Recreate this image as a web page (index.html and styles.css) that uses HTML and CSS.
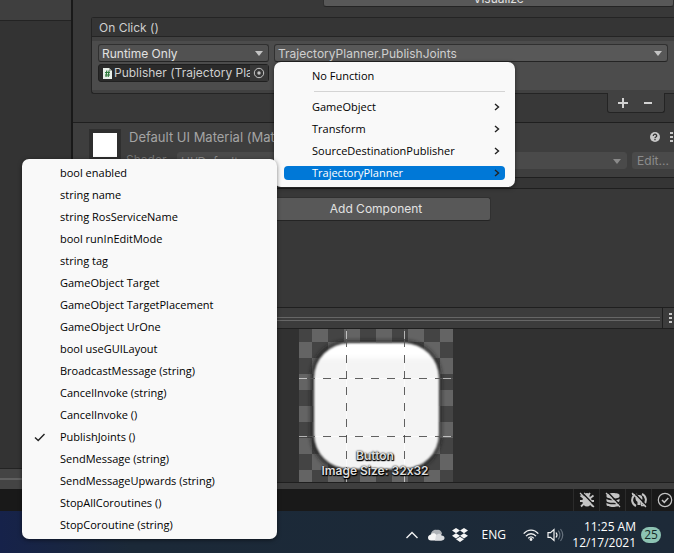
FILE: index.html
```html
<!DOCTYPE html>
<html lang="en">
<head>
<meta charset="utf-8">
<title>Inspector</title>
<link rel="stylesheet" href="styles.css">
</head>
<body>
<main class="editor">
  <aside class="side">
    <div class="side-head"></div>
    <div class="side-body"></div>
    <div class="side-foot"></div>
  </aside>

  <section class="inspector">
    <div class="script-row"><button class="btn visualize">Visualize</button></div>

    <div class="event">
      <div class="event-head">On Click ()</div>
      <div class="event-body">
        <div class="event-target">
          <div class="drop"><select aria-label="Call state"><option>Runtime Only</option></select></div>
          <div class="object">
            <svg class="script-icon" width="9" height="11" viewBox="0 0 9 11"><path d="M0 0h6l3 3v8H0z" fill="#e8efe9"/><path d="M6 0l3 3H6z" fill="#a9b5aa"/><path d="M3.800 2.500L3 9M6 2.500L5.200 9M2 4.500h5M2 7h5" stroke="#2f7a3d" stroke-width="1.200"/></svg>
            <input type="text" aria-label="Target object" value="Publisher (Trajectory Planner)" readonly>
            <button class="pick" aria-label="Pick object"><svg width="12" height="12" viewBox="0 0 12 12"><circle cx="6" cy="6" r="4.700" fill="none" stroke="#c4c4c4"/><circle cx="6" cy="6" r="1.700" fill="#c4c4c4"/></svg></button>
          </div>
        </div>
        <div class="drop drop-wide"><select aria-label="Function"><option>TrajectoryPlanner.PublishJoints</option></select></div>
      </div>
    </div>
    <div class="event-tools">
      <button aria-label="Add"><svg width="10" height="10" viewBox="0 0 10 10"><path d="M5 0v10M0 5h10" stroke="#d2d2d2" stroke-width="2"/></svg></button>
      <button aria-label="Remove"><svg width="10" height="10" viewBox="0 0 10 10"><path d="M1 5h8" stroke="#d2d2d2" stroke-width="2"/></svg></button>
    </div>

    <div class="material">
      <div class="thumb"></div>
      <div class="material-main">
        <div class="material-title">
          <span>Default UI Material (Material)</span>
          <svg class="help" width="10" height="10" viewBox="0 0 10 10"><circle cx="5" cy="5" r="5" fill="#c8c8c8"/><path d="M3.300 3.900c0-2.300 3.500-2.200 3.400 0C6.700 5 5 5 5 6.200M5 7v1.300" fill="none" stroke="#333" stroke-width="1.300"/></svg>
          <svg width="3" height="12" viewBox="0 0 3 12"><path d="M0 1h3v2H0zM0 5h3v2H0zM0 9h3v2H0z" fill="#c8c8c8"/></svg>
        </div>
        <div class="shader">
          <label for="shader">Shader</label>
          <div class="drop drop-off"><select id="shader" disabled><option>UI/Default</option></select></div>
          <button class="edit" disabled>Edit...</button>
        </div>
      </div>
    </div>
    <div class="strip"></div>

    <div class="add"><button class="btn add-btn">Add Component</button></div>

    <div class="preview-head">
      <div class="grip"></div>
      <button class="kebab" aria-label="Preview menu"><svg width="3" height="12" viewBox="0 0 3 12"><path d="M0 1h3v2H0zM0 5h3v2H0zM0 9h3v2H0z" fill="#c8c8c8"/></svg></button>
    </div>
    <div class="preview">
      <figure>
        <svg width="154" height="153" viewBox="0 0 154 153">
          <defs>
            <pattern id="check" x="13" y="13" width="32" height="32" patternUnits="userSpaceOnUse">
              <path d="M0 0h32v32H0z" fill="#444"/><path d="M16 0h16v16H16zM0 16h16v16H0z" fill="#646464"/>
            </pattern>
            <filter id="dark" x="-20%" y="-20%" width="140%" height="140%"><feGaussianBlur stdDeviation="2"/></filter>
            <filter id="soft"><feGaussianBlur stdDeviation="1"/></filter>
            <linearGradient id="fill" x1="0" y1="0" x2="0" y2="1">
              <stop offset="0" stop-color="#fff"/><stop offset=".09" stop-color="#fff"/><stop offset=".15" stop-color="#f4f4f4"/><stop offset="1" stop-color="#f4f4f4"/>
            </linearGradient>
          </defs>
          <rect width="154" height="153" fill="url(#check)"/>
          <rect x="12" y="12" width="130" height="130" rx="36" fill="#1c1c1c" opacity=".85" filter="url(#dark)"/>
          <rect x="15" y="14" width="125" height="126" rx="35" fill="url(#fill)" filter="url(#soft)"/>
          <g fill="none">
            <path d="M47.500 0v153M105.500 0v153M0 49.500h154M0 107.500h154" stroke="#fff" stroke-opacity=".6"/>
            <path d="M47.500-6v159M105.500-6v159M-8 49.500h162M-8 107.500h162" stroke="#444" stroke-opacity=".85" stroke-dasharray="8 8"/>
          </g>
        </svg>
        <figcaption>Button<br>Image Size: 32x32</figcaption>
      </figure>
    </div>
    <div class="preview-foot"></div>
  </section>
</main>

<footer class="status">
  <button aria-label="Debugger"><svg width="16" height="16" viewBox="0 0 16 16"><ellipse cx="8" cy="9" rx="4.600" ry="5.500" fill="#c4c4c4"/><circle cx="8" cy="3.500" r="2.500" fill="#c4c4c4"/><path d="M1.500 3.500l4 3M14.500 3.500l-4 3M1 9h14M2 14.500l3-3M14 14.500l-3-3M5 1l1.500 2M11 1L9.500 3" stroke="#c4c4c4" stroke-width="1.800"/><path d="M2.500 0l13.500 14" stroke="#191919" stroke-width="1.500"/><path d="M1 1l14 14" stroke="#c4c4c4" stroke-width="1.300"/></svg></button>
  <button aria-label="Cache server"><svg width="16" height="16" viewBox="0 0 16 16"><path d="M1.500 3c0-2.700 13-2.700 13 0v1.500c0 2.700-13 2.700-13 0zM1.500 6.800c2 2 11 2 13 0v2c0 2.700-13 2.700-13 0zM1.500 10.800c2 2 11 2 13 0v2c0 2.900-13 2.900-13 0z" fill="#c4c4c4"/><path d="M2.500 0l13.500 14" stroke="#191919" stroke-width="1.500"/><path d="M1 1l14 14" stroke="#c4c4c4" stroke-width="1.300"/></svg></button>
  <button aria-label="Auto lighting"><svg width="16" height="16" viewBox="0 0 16 16"><path d="M5 14A6.500 6.500 0 0 1 3 3.500M11 2A6.500 6.500 0 0 1 13 12.500" fill="none" stroke="#c4c4c4" stroke-width="2"/><path d="M1 2.500h4.500V7M15 13.500h-4.500V9" fill="none" stroke="#c4c4c4" stroke-width="1.300"/><circle cx="8" cy="6.500" r="3.400" fill="#c4c4c4"/><path d="M6.500 9h3v4h-3z" fill="#c4c4c4"/><path d="M2.500 0l13.500 14" stroke="#191919" stroke-width="1.500"/><path d="M1 1l14 14" stroke="#c4c4c4" stroke-width="1.300"/></svg></button>
  <button class="last" aria-label="Progress"><svg width="16" height="16" viewBox="0 0 16 16"><circle cx="8" cy="8" r="6.700" fill="none" stroke="#c4c4c4" stroke-width="1.200"/><path d="M5 8l2.300 2.300L11.300 6" fill="none" stroke="#c4c4c4" stroke-width="1.500"/></svg></button>
</footer>

<footer class="taskbar">
  <svg class="chev" width="14" height="10" viewBox="0 0 14 10"><path d="M1.500 8L7 2.500 12.500 8" fill="none" stroke="#f2f2f2" stroke-width="1.400"/></svg>
  <svg class="cloud" width="18" height="12" viewBox="0 0 18 12"><path d="M4 7C3 3 7 0 10 1c2-.8 5 1 5 4l-6 5z" fill="#aeb2b7"/><path d="M4 11.500C0 11.500 0 6 4 5.500c1.500-2 4-1.500 5 0l7 4c0 1-1 2-2 2z" fill="#f6f6f6"/><path d="M9 6.500c2-2.500 5-2 5.500 0 4 0 4 5 0 5H8z" fill="#dadcdf"/></svg>
  <svg class="box" width="16" height="14" viewBox="0 0 16 14"><path d="M4 0l4 2.600-4 2.600L0 2.600zM12 0l4 2.600-4 2.600-4-2.600zM4 5.200l4 2.600-4 2.600-4-2.600zM12 5.200l4 2.600-4 2.600-4-2.600zM8 8.700l4 2.600L8 14l-4-2.700z" fill="#f6f6f6"/></svg>
  <span class="lang">ENG</span>
  <svg class="wifi" width="16" height="12" viewBox="0 0 16 12"><g fill="none" stroke="#f2f2f2" stroke-width="1.300"><path d="M.7 4.700c4-4.800 10.600-4.800 14.600 0M3 7.200c2.800-3.300 7.200-3.300 10 0M5.200 9.300c1.600-1.900 4-1.900 5.600 0"/></g><circle cx="8" cy="10.500" r="1.400" fill="#f2f2f2"/></svg>
  <svg class="sound" width="17" height="14" viewBox="0 0 17 14"><path d="M1 4.700h2.500L7 1.500v11L3.500 9.300H1z" fill="none" stroke="#f2f2f2" stroke-width="1.200"/><path d="M9 4.500q2 2.500 0 5" fill="none" stroke="#f2f2f2" stroke-width="1.200"/><path d="M11.300 2.700q3.200 4.300 0 8.600M13.500 1q4.500 6 0 12" fill="none" stroke="#66717d" stroke-width="1.200"/></svg>
  <div class="clock"><time>11:25 AM</time><time>12/17/2021</time></div>
  <span class="badge">25</span>
</footer>

<ul class="menu menu-components">
  <li><button>No Function</button></li>
  <li class="rule"></li>
  <li><button>GameObject<svg width="6" height="8" viewBox="0 0 6 8"><path d="M1 1l3.500 3L1 7"/></svg></button></li>
  <li><button>Transform<svg width="6" height="8" viewBox="0 0 6 8"><path d="M1 1l3.500 3L1 7"/></svg></button></li>
  <li><button>SourceDestinationPublisher<svg width="6" height="8" viewBox="0 0 6 8"><path d="M1 1l3.500 3L1 7"/></svg></button></li>
  <li><button class="active">TrajectoryPlanner<svg width="6" height="8" viewBox="0 0 6 8"><path d="M1 1l3.500 3L1 7"/></svg></button></li>
</ul>

<ul class="menu menu-members">
  <li><button>bool enabled</button></li>
  <li><button>string name</button></li>
  <li><button>string RosServiceName</button></li>
  <li><button>bool runInEditMode</button></li>
  <li><button>string tag</button></li>
  <li><button>GameObject Target</button></li>
  <li><button>GameObject TargetPlacement</button></li>
  <li><button>GameObject UrOne</button></li>
  <li><button>bool useGUILayout</button></li>
  <li><button>BroadcastMessage (string)</button></li>
  <li><button>CancelInvoke (string)</button></li>
  <li><button>CancelInvoke ()</button></li>
  <li><button class="checked"><svg width="12" height="9" viewBox="0 0 12 9"><path d="M1 4.500L4.200 7.500 10.500 1"/></svg>PublishJoints ()</button></li>
  <li><button>SendMessage (string)</button></li>
  <li><button>SendMessageUpwards (string)</button></li>
  <li><button>StopAllCoroutines ()</button></li>
  <li><button>StopCoroutine (string)</button></li>
</ul>
</body>
</html>
```
FILE: styles.css
```css
* { box-sizing: border-box; }
body {
  margin: 0;
  min-height: 100vh;
  display: flex;
  flex-direction: column;
  position: relative;
  overflow: hidden;
  background: #383838;
  color: #cfcfcf;
  font: 12px/18px Inter, "Liberation Sans", sans-serif;
  font-feature-settings: "calt" 0;
}
button, select, input { font: inherit; font-feature-settings: inherit; color: inherit; margin: 0; padding: 0; border: 0; background: none; }
svg { display: block; flex: none; }

.editor { flex: 1; display: flex; }
.side { width: 73px; flex: none; display: flex; flex-direction: column; border-right: 2px solid #191919; background: #333; }
.side-head { height: 21px; background: #3f3f3f; border-bottom: 1px solid #232323; }
.side-body { flex: 1; }
.side-foot { height: 21px; border-top: 1px solid #232323; background: linear-gradient(#606060, #606060) 0 9px / 100% 2px no-repeat #444; }

.inspector { flex: 1; min-width: 0; display: flex; flex-direction: column; }
.btn { background: #585858; border: 1px solid #303030; border-bottom-color: #242424; border-radius: 3px; color: #e2e2e2; }
.script-row { height: 17px; display: flex; justify-content: flex-end; align-items: flex-start; }
.visualize { width: 351px; height: 18px; margin-top: -11px; }

.event { margin-left: 18px; border: 1px solid #242424; border-right: 0; border-radius: 3px 0 0 3px; background: #414141; }
.event-head { height: 19px; padding: 1px 7px; background: #353535; border-bottom: 1px solid #242424; }
.event-body { display: flex; gap: 5px; align-items: flex-start; margin: 4px 0 3px; padding: 3px 6px 8px; background: #4c4c4c; }
.event-target { width: 171px; flex: none; display: flex; flex-direction: column; gap: 2px; }
.drop { position: relative; flex: 1; min-width: 0; display: flex; }
.drop select { width: 100%; height: 18px; padding: 0 3px; appearance: none; border: 1px solid #303030; border-bottom-color: #242424; border-radius: 3px; background: #515151; color: #e2e2e2; }
.drop-wide select { background: #585858; color: #cfcfcf; }
.drop::after { content: ""; position: absolute; right: 6px; top: 7px; border: 4px solid transparent; border-top: 5px solid #c4c4c4; border-bottom: 0; }
.object { height: 18px; display: flex; align-items: center; padding-left: 4px; border: 1px solid #202020; border-radius: 3px; background: #2a2a2a; }
.object input { flex: 1; min-width: 0; height: 16px; margin-left: 2px; }
.pick { width: 18px; height: 16px; display: grid; place-items: center; background: #373737; }
.event-tools { align-self: flex-end; display: flex; margin: -1px 9px 9px; padding: 0 3px 0 2px; width: 58px; height: 20px; border: 1px solid #242424; border-top: 0; border-radius: 0 0 3px 3px; background: #414141; }
.event-tools button { flex: 1; display: grid; place-items: center; }

.material { display: flex; gap: 5px; height: 56px; padding: 6px 0 0 16px; border-top: 1px solid #1f1f1f; border-bottom: 1px solid #1f1f1f; background: #3e3e3e; color: #a4a4a4; }
.thumb { width: 32px; height: 32px; border: 4px solid #2f2f2f; background: #fff; }
.material-main { flex: 1; min-width: 0; }
.material-title { display: flex; align-items: center; gap: 10px; height: 16px; padding-left: 3px; font-size: 13px; }
.material-title span { flex: 1; }
.material-title svg:last-child { margin-right: 1px; }
.shader { display: flex; align-items: center; margin-top: 6px; color: #777; }
.shader label { width: 51px; }
.drop-off select { height: 17px; border-color: #4a4a4a; background: #4a4a4a; color: #8c8c8c; opacity: 1; }
.drop-off::after { border-top-color: #8a8a8a; }
.edit { width: 42px; height: 17px; margin-left: 5px; border-radius: 3px 0 0 3px; background: #4a4a4a; color: #8c8c8c; }
.strip { height: 11px; background: #353535; border-bottom: 1px solid #1f1f1f; }
.add { flex: 1; display: flex; justify-content: center; align-items: flex-start; padding: 8px 0 0 5px; }
.add-btn { width: 230px; height: 24px; }

.preview-head { display: flex; height: 22px; border-top: 1px solid #1f1f1f; border-bottom: 1px solid #1f1f1f; background: #3c3c3c; }
.grip { flex: 1; height: 4px; margin: 9px 2px 0 0; border-top: 1px solid #666; border-bottom: 1px solid #666; }
.kebab { width: 12px; display: flex; align-items: center; justify-content: flex-end; padding-right: 2px; border-left: 1px solid #1f1f1f; }
.preview { display: flex; justify-content: center; background: #313131; padding-left: 5px; }
.preview figure { margin: 0; display: grid; }
.preview svg, .preview figcaption { grid-area: 1 / 1; }
.preview figcaption { align-self: end; z-index: 1; padding: 0 2px 4px 0; text-align: center; line-height: 15px; font-weight: 600; color: #dedede; text-shadow: 0 1px 1px #000, 1px 1px 1px #000, 0 0 2px #000; }
.preview-foot { height: 7px; border-top: 1px solid #1f1f1f; background: #3e3e3e; }

.status { height: 22px; flex: none; display: flex; justify-content: flex-end; background: #191919; }
.status button { width: 26px; display: grid; place-items: center; border-left: 1px solid #2b2b2b; }
.status .last { width: 23px; justify-items: end; padding-right: 1px; }

.taskbar { height: 42px; flex: none; display: flex; align-items: center; justify-content: flex-end; padding-right: 13px; padding-top: 5px; background: linear-gradient(90deg, #16224a, #1b2938 130px, #1d2a38); color: #fff; font-family: "Open Sans", "Noto Sans", sans-serif; }
.cloud { margin-left: 8px; }
.box { margin-left: 7px; }
.lang { margin-left: 14px; }
.wifi { margin-left: 17px; }
.sound { margin-left: 8px; }
.clock { display: flex; flex-direction: column; width: 66px; margin-left: 6px; text-align: right; line-height: 16px; white-space: nowrap; }
.badge { width: 20px; height: 16px; margin-left: 5px; border-radius: 8px; background: #8dc3b3; color: #142a28; text-align: center; line-height: 16px; }

.menu { position: absolute; margin: 0; padding: 3px 10px; list-style: none; border-radius: 7px; background: #f9f9f9; color: #000; box-shadow: 0 1px 4px rgba(0, 0, 0, .5); font-size: 11px; font-family: "Open Sans", "Noto Sans", sans-serif; }
.menu li { height: 22px; display: flex; align-items: center; }
.menu button { width: 100%; height: 14px; display: flex; align-items: center; justify-content: space-between; padding: 0 5px 0 28px; border-radius: 4px; white-space: nowrap; }
.menu path { fill: none; stroke: #222; stroke-width: 1.4; }
.menu .rule { height: 1px; margin: 4px 0 4px 30px; background: #d4d4d4; }
.menu .active { background: #0078d7; color: #fff; }
.menu .checked { justify-content: flex-start; gap: 14px; padding-left: 2px; }
.menu-components { left: 274px; top: 62px; width: 241px; }
.menu-members { left: 22px; top: 159px; width: 255px; }
```
